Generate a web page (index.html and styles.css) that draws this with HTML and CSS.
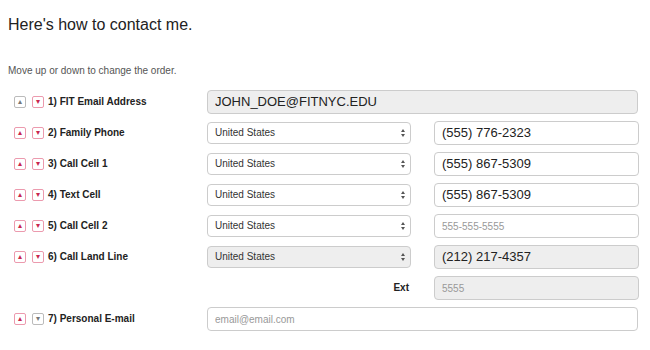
FILE: index.html
```html
<!DOCTYPE html>
<html lang="en">
<head>
    <meta charset="UTF-8">
    <title>Contact</title>
    <link rel="stylesheet" href="styles.css">
</head>
<body>
<h1>Here's how to contact me.</h1>
<p class="hint">Move up or down to change the order.</p>

<div class="rows">
    <div class="row">
        <div class="label-col">
            <span class="move off">&#9652;</span>
            <span class="move">&#9662;</span>
            <label>1) FIT Email Address</label>
        </div>
        <input class="field wide" type="text" value="JOHN_DOE@FITNYC.EDU" readonly>
    </div>

    <div class="row">
        <div class="label-col">
            <span class="move">&#9652;</span>
            <span class="move">&#9662;</span>
            <label>2) Family Phone</label>
        </div>
        <div class="select">United States<span class="arrows"></span></div>
        <input class="field phone" type="text" value="(555) 776-2323">
    </div>

    <div class="row">
        <div class="label-col">
            <span class="move">&#9652;</span>
            <span class="move">&#9662;</span>
            <label>3) Call Cell 1</label>
        </div>
        <div class="select">United States<span class="arrows"></span></div>
        <input class="field phone" type="text" value="(555) 867-5309">
    </div>

    <div class="row">
        <div class="label-col">
            <span class="move">&#9652;</span>
            <span class="move">&#9662;</span>
            <label>4) Text Cell</label>
        </div>
        <div class="select">United States<span class="arrows"></span></div>
        <input class="field phone" type="text" value="(555) 867-5309">
    </div>

    <div class="row">
        <div class="label-col">
            <span class="move">&#9652;</span>
            <span class="move">&#9662;</span>
            <label>5) Call Cell 2</label>
        </div>
        <div class="select">United States<span class="arrows"></span></div>
        <input class="field phone" type="text" placeholder="555-555-5555">
    </div>

    <div class="row">
        <div class="label-col">
            <span class="move">&#9652;</span>
            <span class="move">&#9662;</span>
            <label>6) Call Land Line</label>
        </div>
        <div class="select locked">United States<span class="arrows"></span></div>
        <input class="field phone locked" type="text" value="(212) 217-4357" readonly>
    </div>

    <div class="row">
        <div class="label-col"></div>
        <div class="ext">Ext</div>
        <input class="field phone locked" type="text" placeholder="5555" readonly>
    </div>

    <div class="row">
        <div class="label-col">
            <span class="move">&#9652;</span>
            <span class="move off">&#9662;</span>
            <label>7) Personal E-mail</label>
        </div>
        <input class="field wide" type="text" placeholder="email@email.com">
    </div>
</div>
</body>
</html>
```

FILE: styles.css
```css
body {
    margin: 0;
    padding: 14px 8px;
    background: #fff;
    color: #222;
    font-family: "Liberation Sans", Arial, sans-serif;
}
h1 {
    margin: 0 0 30px;
    font-size: 16px;
    font-weight: normal;
    line-height: 21px;
}
.hint {
    margin: 0 0 9px;
    font-size: 10px;
    line-height: 12px;
    color: #555;
}
.row {
    display: flex;
    align-items: center;
    height: 31px;
}
.label-col {
    width: 199px;
    padding-left: 6px;
    box-sizing: border-box;
    display: flex;
    align-items: center;
    flex-shrink: 0;
}
.move {
    width: 12px;
    height: 12px;
    box-sizing: border-box;
    border: 1px solid #ec9aae;
    border-radius: 2px;
    margin-right: 6px;
    color: #c8284e;
    font-size: 8px;
    line-height: 10px;
    text-align: center;
}
.move.off {
    border-color: #bbb;
    color: #777;
}
label {
    margin-left: -2px;
    font-size: 10px;
    font-weight: bold;
    color: #222;
}
.field {
    height: 24px;
    box-sizing: border-box;
    border: 1px solid #ccc;
    border-radius: 4px;
    padding: 0 7px;
    font-family: "Liberation Sans", Arial, sans-serif;
    font-size: 13px;
    color: #222;
    background: #fff;
    outline: none;
}
.field::placeholder {
    color: #999;
    font-size: 10px;
}
.wide {
    width: 431px;
}
.wide[readonly] {
    background: #eee;
}
.phone {
    width: 205px;
    margin-left: 23px;
}
.field.locked {
    background: #eee;
}
.select {
    position: relative;
    width: 204px;
    height: 22px;
    box-sizing: border-box;
    border: 1px solid #ccc;
    border-radius: 4px;
    padding: 0 7px;
    font-size: 10px;
    line-height: 20px;
    color: #333;
    background: #fff;
}
.select.locked {
    background: #eee;
}
.arrows {
    position: absolute;
    right: 5px;
    top: 6px;
    width: 0;
    height: 0;
    border-left: 2px solid transparent;
    border-right: 2px solid transparent;
    border-bottom: 3px solid #555;
}
.arrows::after {
    content: "";
    position: absolute;
    left: -2px;
    top: 5px;
    border-left: 2px solid transparent;
    border-right: 2px solid transparent;
    border-top: 3px solid #555;
}
.ext {
    width: 204px;
    text-align: right;
    padding-right: 2px;
    box-sizing: border-box;
    font-size: 10px;
    font-weight: bold;
}
```
